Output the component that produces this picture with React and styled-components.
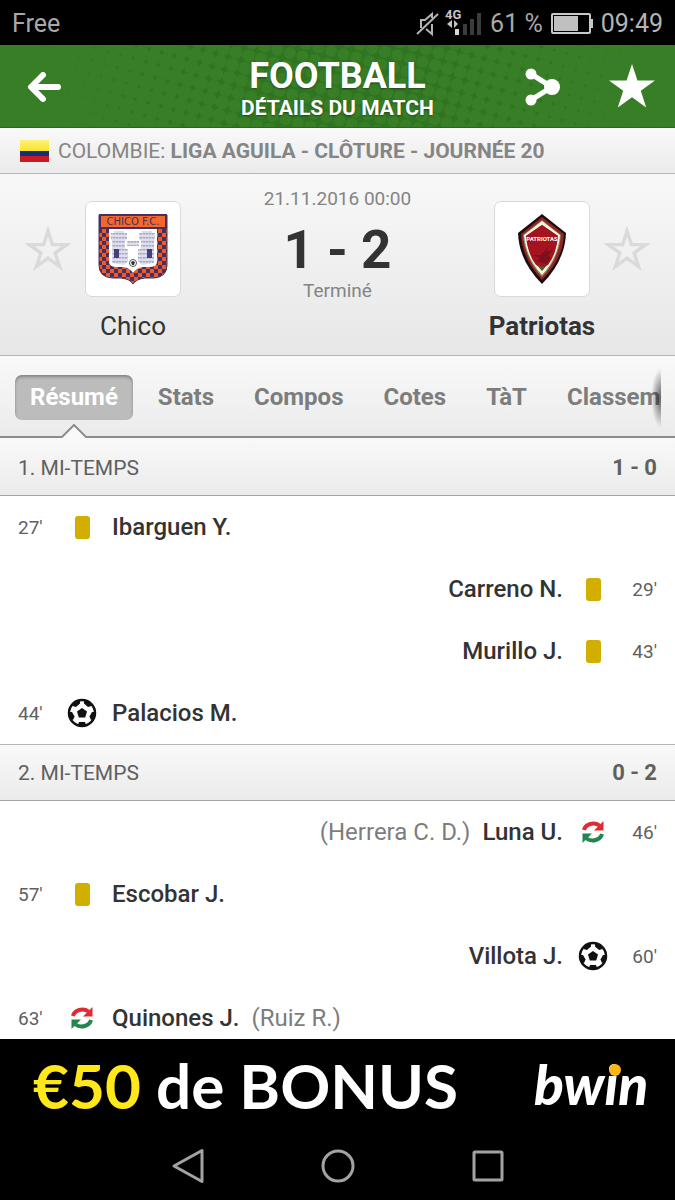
import React from "react";
import styled, { createGlobalStyle, css } from "styled-components";

const periods = [
  {
    name: "1. MI-TEMPS",
    score: "1 - 0",
    events: [
      { time: "27'", type: "card", player: "Ibarguen Y." },
      { time: "29'", type: "card", player: "Carreno N.", away: true },
      { time: "43'", type: "card", player: "Murillo J.", away: true },
      { time: "44'", type: "goal", player: "Palacios M." },
    ],
  },
  {
    name: "2. MI-TEMPS",
    score: "0 - 2",
    events: [
      { time: "46'", type: "sub", player: "Luna U.", out: "(Herrera C. D.)", away: true },
      { time: "57'", type: "card", player: "Escobar J." },
      { time: "60'", type: "goal", player: "Villota J.", away: true },
      { time: "63'", type: "sub", player: "Quinones J.", out: "(Ruiz R.)" },
    ],
  },
];

const tabs = ["Résumé", "Stats", "Compos", "Cotes", "TàT", "Classement"];

// Halftone: the circles grow towards both ends until only small stars are left
const halftone = [];
for (let i = -12; i < 60; i++) {
  for (let j = -24; j < 24; j++) {
    const x = i * 12.6 - j * 3.4;
    const y = i * 3.4 + j * 12.6 - 70;
    if (x > -12 && x < 690 && y > -12 && y < 94) {
      const d = Math.abs(x - 345);
      halftone.push({ x, y, r: 6 + Math.max(0, d - 70) / 70 });
    }
  }
}

const Halftone = () => (
  <Pattern viewBox="0 0 675 82" preserveAspectRatio="xMidYMid slice" aria-hidden="true">
    <rect width="675" height="82" fill="#2f7521" />
    {halftone.map((c, index) => (
      <circle key={index} cx={c.x} cy={c.y} r={c.r} fill="#377e26" />
    ))}
  </Pattern>
);

const StatusIcons = () => (
  <svg width="66" height="34" viewBox="0 0 66 34" aria-hidden="true">
    <g fill="none" stroke="#b4b4b4" strokeWidth="2">
      <path d="M1 27L22 7" />
      <path d="M5 21V13H9L16 7V11M10 22L16 27V17" />
    </g>
    <text x="29" y="12" fontFamily="Roboto, sans-serif" fontSize="13" fontWeight="700" fill="#c4c4c4">
      4G
    </text>
    <path d="M31 17L36 13V21ZM42 17L38 13V21Z" fill="#c4c4c4" />
    <rect x="39" y="22" width="4" height="6" fill="#d8d8d8" />
    <rect x="47" y="17" width="4" height="11" fill="#3c3c3c" />
    <rect x="54" y="12" width="4" height="16" fill="#3c3c3c" />
    <rect x="61" y="6" width="4" height="22" fill="#3c3c3c" />
  </svg>
);

const Battery = () => (
  <svg width="42" height="22" viewBox="0 0 42 22" aria-hidden="true">
    <rect x="1" y="1" width="38" height="19" rx="1" fill="none" stroke="#c8c8c8" strokeWidth="2" />
    <rect x="3" y="3" width="24" height="15" fill="#c0c0c0" />
    <rect x="39" y="6" width="3" height="9" fill="#c8c8c8" />
  </svg>
);

const BackIcon = () => (
  <svg width="34" height="30" viewBox="0 0 34 30" fill="none" stroke="#fff" strokeWidth="6">
    <path d="M16 3L4 15L16 27M5 15H31" strokeLinecap="round" strokeLinejoin="round" />
  </svg>
);

const ShareIcon = () => (
  <svg width="36" height="38" viewBox="0 0 36 38" fill="#fff">
    <path d="M6 6L27 19L6 32" fill="none" stroke="#fff" strokeWidth="5" />
    <circle cx="6" cy="6" r="5.500" />
    <circle cx="6" cy="32" r="5.500" />
    <circle cx="27" cy="19" r="8" />
  </svg>
);

const Star = ({ size, outline }) => (
  <svg width={size} height={size} viewBox={outline ? "-4 -4 54 54" : "1 2 44 44"}>
    <path
      d="M23 2L28.200 17.900H45L31.400 27.700L36.600 43.600L23 33.800L9.400 43.600L14.600 27.700L1 17.900H17.800Z"
      fill={outline ? "none" : "#fff"}
      stroke={outline ? "#dadada" : "none"}
      strokeWidth="4"
    />
  </svg>
);

const ChicoCrest = () => (
  <svg width="70" height="72" viewBox="0 0 70 72" role="img" aria-label="Chico">
    <defs>
      <pattern id="checks" width="8" height="8" patternUnits="userSpaceOnUse">
        <rect width="8" height="8" fill="#f05a28" />
        <rect width="4" height="4" fill="#46305f" />
        <rect x="4" y="4" width="4" height="4" fill="#46305f" />
      </pattern>
      <pattern id="bricks" width="3" height="4" patternUnits="userSpaceOnUse">
        <rect width="3" height="4" fill="#dedeec" />
        <path d="M0 0H3M1 0V2" stroke="#8d8db8" strokeWidth="0.800" />
      </pattern>
    </defs>
    <path
      d="M1 2H69V52Q69 64 56 65H47Q38 66 35 71Q32 66 23 65H14Q1 64 1 52Z"
      fill="url(#checks)"
      stroke="#46305f"
    />
    <path d="M11 16H59V49Q59 54 51 54H45Q38 55 35 60Q32 55 25 54H19Q11 54 11 49Z" fill="#fff" />
    <rect x="1" y="1" width="68" height="15" fill="#46305f" />
    <rect x="3" y="3" width="64" height="11" fill="#f4672c" />
    <text x="35" y="12" textAnchor="middle" fontFamily="DejaVu Sans, sans-serif" fontSize="10" fill="#46305f">
      CHICO F.C.
    </text>
    <path
      d="M13 20H16V18H26V20H29V26L27 28V36H30V48L26 52L14 50V28L13 26ZM57 20H54V18H44V20H41V26L43 28V36H40V48L44 52L56 50V28L57 26Z"
      fill="url(#bricks)"
    />
    <path d="M29 28H41V33H29Z" fill="url(#bricks)" />
    <path d="M16 36H21V45H16ZM49 36H54V45H49Z" fill="#454078" />
    <circle cx="35" cy="50" r="3.500" fill="#fff" stroke="#555" />
    <path d="M33 49L35 48L37 49L36 52H34Z" fill="#333" />
  </svg>
);

const PatriotasCrest = () => (
  <svg width="50" height="72" viewBox="0 0 50 72" role="img" aria-label="Patriotas">
    <path d="M25 1L49 20Q48 48 25 71Q2 48 1 20Z" fill="#190d10" />
    <path d="M25 4L47 21Q46 46 25 67Q5 46 4 21Z" fill="#9a2027" />
    <path d="M25 7L44 22Q42 46 25 64Q8 46 6 22Z" fill="#7d9160" />
    <path d="M25 8L43 22Q41 45 25 62Q9 45 7 22Z" fill="#f7f5dc" />
    <path d="M25 12L41 23Q39 43 25 58Q11 43 9 23Z" fill="#4e5930" />
    <path d="M25 12L41 23Q39 42 31 52Q25 55 19 52Q11 42 9 23Z" fill="#a51220" />
    <path d="M15 42L24 42L32 33L29 39L36 37L31 42L34 45L29 51L19 48L24 45Z" fill="#7c101c" />
    <text x="25" y="28" textAnchor="middle" fontFamily="Roboto, sans-serif" fontSize="6" fontWeight="700" fill="#fff">
      PATRIOTAS
    </text>
  </svg>
);

const Ball = () => (
  <svg width="30" height="30" viewBox="0 0 30 30" role="img" aria-label="But">
    <circle cx="15" cy="15" r="13" fill="#fff" stroke="#111" strokeWidth="2.500" />
    <g fill="#111">
      <path d="M15 10L20 13.500L18.200 19.500H11.800L10 13.500Z" />
      <path d="M8 3L13 2.500L13 5.500L9 9L5.500 8Z" />
      <path d="M22 3L17 2.500L17 5.500L21 9L24.500 8Z" />
      <path d="M2 14L5 14L7.500 18.500L6 22L3.500 21Z" />
      <path d="M28 14L25 14L22.500 18.500L24 22L26.500 21Z" />
      <path d="M11 27L12 24H18L19 27L15 28.500Z" />
    </g>
  </svg>
);

const Substitution = () => (
  <svg width="24" height="24" viewBox="0 0 24 24" role="img" aria-label="Remplacement">
    <path d="M3 10A9.500 8 0 0 1 18.500 5.500" fill="none" stroke="#df2b35" strokeWidth="4" />
    <path d="M22.500 1V10.500H13Z" fill="#df2b35" />
    <path d="M21 14A9.500 8 0 0 1 5.500 18.500" fill="none" stroke="#24844f" strokeWidth="4" />
    <path d="M1.500 23V13.500H11Z" fill="#24844f" />
  </svg>
);

const Flag = () => (
  <svg width="29" height="22" viewBox="0 0 29 22" role="img" aria-label="Colombie">
    <defs>
      <linearGradient id="gloss" x2="0" y2="1">
        <stop stopColor="#fdf07a" />
        <stop offset="1" stopColor="#fae42a" />
      </linearGradient>
    </defs>
    <rect width="29" height="11" fill="url(#gloss)" />
    <rect y="11" width="29" height="5" fill="#10307c" />
    <rect y="16" width="29" height="6" fill="#cc1820" />
  </svg>
);

const BwinLogo = () => (
  <svg width="118" height="66" viewBox="0 0 118 66" role="img" aria-label="bwin">
    <text x="2" y="52" fontFamily="Lato, sans-serif" fontSize="55" fontWeight="900" fontStyle="italic" fill="#fff">
      bwin
    </text>
    <circle cx="83" cy="17" r="6" fill="#fbb615" />
  </svg>
);

const EventIcon = ({ type }) => {
  if (type === "goal") return <Ball />;
  if (type === "sub") return <Substitution />;
  return <YellowCard role="img" aria-label="Carton jaune" />;
};

const App = () => {
  return (
    <Screen>
      <GlobalStyle />
      <StatusBar>
        <span>Free</span>
        <StatusGroup>
          <StatusIcons />
          <span>61 %</span>
          <Battery />
          <Clock>09:49</Clock>
        </StatusGroup>
      </StatusBar>

      <Header>
        <Halftone />
        <HeaderSide>
          <IconButton aria-label="Retour">
            <BackIcon />
          </IconButton>
        </HeaderSide>
        <Titles>
          <Title>FOOTBALL</Title>
          <Subtitle>DÉTAILS DU MATCH</Subtitle>
        </Titles>
        <HeaderSide $end>
          <IconButton aria-label="Partager">
            <ShareIcon />
          </IconButton>
          <IconButton aria-label="Favori">
            <Star size={46} />
          </IconButton>
        </HeaderSide>
      </Header>

      <League>
        <Flag />
        <span>
          COLOMBIE: <b>LIGA AGUILA - CLÔTURE - JOURNÉE 20</b>
        </span>
      </League>

      <Match>
        <Team>
          <IconButton aria-label="Suivre Chico">
            <Star size={46} outline />
          </IconButton>
          <Crest>
            <ChicoCrest />
          </Crest>
          <TeamName>Chico</TeamName>
        </Team>
        <Result>
          <Small>21.11.2016 00:00</Small>
          <Score>1 - 2</Score>
          <Small>Terminé</Small>
        </Result>
        <Team $away>
          <IconButton aria-label="Suivre Patriotas">
            <Star size={46} outline />
          </IconButton>
          <Crest>
            <PatriotasCrest />
          </Crest>
          <TeamName $winner>Patriotas</TeamName>
        </Team>
      </Match>

      <Tabs>
        <TabStrip>
          {tabs.map((tab, index) => (
            <Tab key={tab} $active={index === 0}>
              {tab}
              {index === 0 && (
                <Notch viewBox="0 0 28 15" aria-hidden="true">
                  <path d="M0 15L2 13L14 1L26 13L28 15Z" fill="#f9f9f9" />
                  <path d="M0 14L2 13L14 1L26 13L28 14" fill="none" stroke="#8c8c8c" strokeWidth="2" />
                </Notch>
              )}
            </Tab>
          ))}
        </TabStrip>
        <ScrollShade />
      </Tabs>

      <Summary>
        {periods.map((period) => (
          <section key={period.name}>
            <PeriodHeader>
              <span>{period.name}</span>
              <PeriodScore>{period.score}</PeriodScore>
            </PeriodHeader>
            <Events>
              {period.events.map((event) => (
                <Event key={event.time} $away={event.away}>
                  <Time>{event.time}</Time>
                  <IconCell>
                    <EventIcon type={event.type} />
                  </IconCell>
                  <Player>{event.player}</Player>
                  {event.out && <Replaced>{event.out}</Replaced>}
                </Event>
              ))}
            </Events>
          </section>
        ))}
      </Summary>

      <Advert href="#bonus">
        <Offer>
          <em>€50</em> de BONUS
        </Offer>
        <BwinLogo />
      </Advert>

      <SystemNav>
        <IconButton aria-label="Précédent">
          <svg width="36" height="36" viewBox="0 0 36 36" fill="none" stroke="#a3a3a3" strokeWidth="3">
            <path d="M32 2.500V33.500L4 18Z" strokeLinejoin="round" />
          </svg>
        </IconButton>
        <IconButton aria-label="Accueil">
          <svg width="36" height="36" viewBox="0 0 36 36" fill="none" stroke="#a3a3a3" strokeWidth="3">
            <circle cx="18" cy="18" r="15" />
          </svg>
        </IconButton>
        <IconButton aria-label="Applications">
          <svg width="36" height="36" viewBox="0 0 36 36" fill="none" stroke="#a3a3a3" strokeWidth="3">
            <rect x="4" y="4" width="28" height="28" rx="1" />
          </svg>
        </IconButton>
      </SystemNav>
    </Screen>
  );
};

// Styled Components
const GlobalStyle = createGlobalStyle`
  * {
    box-sizing: border-box;
  }
  body {
    margin: 0;
    background: #000;
    font-family: Roboto, "Liberation Sans", sans-serif;
  }
`;

const bar = css`
  background: linear-gradient(#f9f9f9, #ebebeb);
`;

const Screen = styled.div`
  display: flex;
  flex-direction: column;
  height: 100vh;
  overflow: hidden;
  background: #fff;
  svg {
    display: block;
    flex-shrink: 0;
  }
`;

const StatusBar = styled.div`
  display: flex;
  flex-shrink: 0;
  align-items: center;
  justify-content: space-between;
  height: 45px;
  padding: 2px 12px 0;
  background: #000;
  color: #a8a8a8;
  font-size: 25px;
`;

const StatusGroup = styled.div`
  display: flex;
  align-items: center;
  gap: 8px;
`;

const Clock = styled.time`
  color: #b4b4b4;
`;

const Header = styled.header`
  position: relative;
  display: flex;
  flex-shrink: 0;
  align-items: center;
  height: 83px;
  padding: 2px 20px 0;
  border-bottom: 1px solid #2a661d;
  background: #377e26;
`;

const Pattern = styled.svg`
  position: absolute;
  inset: 0;
  width: 100%;
  height: 100%;
`;

const HeaderSide = styled.div`
  position: relative;
  display: flex;
  flex: 1 0 140px;
  align-items: center;
  justify-content: ${(props) => (props.$end ? "flex-end" : "flex-start")};
  gap: 48px;
  padding-left: ${(props) => (props.$end ? 0 : "7px")};
`;

const IconButton = styled.button`
  display: block;
  padding: 0;
  border: 0;
  background: none;
  cursor: pointer;
`;

const Titles = styled.div`
  position: relative;
  padding-top: 4px;
  color: #fff;
  text-align: center;
  text-shadow: 0 1px 2px rgba(0, 0, 0, 0.4);
`;

const Title = styled.h1`
  margin: 0;
  font-size: 36px;
  font-weight: 700;
  line-height: 38px;
`;

const Subtitle = styled.h2`
  margin: 0;
  font-size: 21px;
  font-weight: 700;
  line-height: 26px;
`;

const League = styled.div`
  ${bar}
  display: flex;
  flex-shrink: 0;
  align-items: center;
  gap: 9px;
  height: 46px;
  padding: 0 20px;
  border-bottom: 1px solid #b9b9b9;
  color: #858585;
  font-size: 21px;
  white-space: nowrap;
`;

const Match = styled.div`
  display: flex;
  flex-shrink: 0;
  justify-content: space-between;
  height: 182px;
  padding: 0 25px;
  border-bottom: 1px solid #b4b4b4;
  background: linear-gradient(#f8f8f8, #e7e7e7);
`;

const Team = styled.div`
  display: grid;
  grid-template-columns: ${(props) => (props.$away ? "96px 46px" : "46px 96px")};
  column-gap: 14px;
  row-gap: 14px;
  align-items: center;
  align-content: start;
  padding-top: 27px;
  ${IconButton} {
    grid-row: 1;
    grid-column: ${(props) => (props.$away ? 2 : 1)};
  }
  > div {
    grid-column: ${(props) => (props.$away ? 1 : 2)};
  }
`;

const Crest = styled.div`
  display: flex;
  grid-row: 1;
  align-items: center;
  justify-content: center;
  height: 96px;
  border: 1px solid #d9d9d9;
  border-radius: 7px;
  background: #fff;
`;

const TeamName = styled.div`
  grid-row: 2;
  justify-self: center;
  color: #333;
  font-size: 26px;
  font-weight: ${(props) => (props.$winner ? 700 : 400)};
  line-height: 30px;
`;

const Result = styled.div`
  padding-top: 12px;
  text-align: center;
`;

const Small = styled.div`
  color: #848484;
  font-size: 19px;
  line-height: 26px;
`;

const Score = styled.div`
  padding-top: 10px;
  color: #333;
  font-size: 53px;
  font-weight: 700;
  line-height: 56px;
`;

const Tabs = styled.nav`
  ${bar}
  position: relative;
  flex-shrink: 0;
  height: 82px;
  padding: 0 14px 0 15px;
  box-shadow: inset 0 -2px #8c8c8c;
`;

const TabStrip = styled.div`
  display: flex;
  align-items: center;
  gap: 10px;
  height: 82px;
  overflow: hidden;
`;

const Tab = styled.button`
  position: relative;
  height: 45px;
  flex-shrink: 0;
  padding: 0 15px;
  border: 0;
  border-radius: 7px;
  background: ${(props) => (props.$active ? "#bcbcbc" : "none")};
  box-shadow: ${(props) => (props.$active ? "inset 0 2px 3px rgba(0, 0, 0, 0.3)" : "none")};
  color: ${(props) => (props.$active ? "#fff" : "#7d7d7d")};
  font-family: inherit;
  font-size: 24px;
  font-weight: 700;
  cursor: pointer;
`;

const Notch = styled.svg`
  position: absolute;
  top: 49px;
  left: 50%;
  width: 28px;
  height: 15px;
  margin-left: -14px;
`;

const ScrollShade = styled.div`
  position: absolute;
  top: 12px;
  right: 14px;
  width: 10px;
  height: 60px;
  background: radial-gradient(ellipse at 100% 50%, rgba(0, 0, 0, 0.6), rgba(0, 0, 0, 0) 70%);
`;

const Summary = styled.main`
  flex: 1;
  min-height: 0;
  overflow-y: auto;
  scrollbar-width: none;
`;

const PeriodHeader = styled.h3`
  ${bar}
  display: flex;
  align-items: center;
  justify-content: space-between;
  height: 57px;
  margin: 0;
  padding: 0 18px;
  border-bottom: 1px solid #a6a6a6;
  color: #606060;
  font-size: 21px;
  font-weight: 400;
  section:first-child > & {
    height: 58px;
    padding-top: 2px;
  }
  section + section > & {
    border-top: 1px solid #b4b4b4;
  }
`;

const PeriodScore = styled.b`
  font-size: 22px;
`;

const Events = styled.ul`
  margin: 0;
  padding: 0;
  list-style: none;
`;

const Event = styled.li`
  display: flex;
  flex-direction: ${(props) => (props.$away ? "row-reverse" : "row")};
  align-items: center;
  height: 62px;
  padding: 0 18px;
  text-align: ${(props) => (props.$away ? "right" : "left")};
`;

const Time = styled.span`
  width: 46px;
  color: #606060;
  font-size: 19px;
`;

const IconCell = styled.span`
  display: flex;
  justify-content: center;
  width: 36px;
`;

const YellowCard = styled.span`
  width: 15px;
  height: 23px;
  border-radius: 3px;
  background: #d1ae00;
`;

const Player = styled.span`
  margin: 0 12px;
  color: #333;
  font-size: 24px;
  font-weight: 500;
`;

const Replaced = styled.span`
  color: #7d7d7d;
  font-size: 24px;
`;

const Advert = styled.a`
  display: flex;
  flex-shrink: 0;
  align-items: center;
  justify-content: space-between;
  height: 93px;
  padding: 0 25px 0 33px;
  background: #000;
  color: #fff;
  text-decoration: none;
`;

const Offer = styled.span`
  font-family: Lato, sans-serif;
  font-size: 62px;
  font-weight: 700;
  line-height: 93px;
  white-space: nowrap;
  em {
    color: #ffe81a;
    font-style: normal;
  }
`;

const SystemNav = styled.nav`
  display: flex;
  flex-shrink: 0;
  align-items: center;
  justify-content: center;
  gap: 114px;
  height: 68px;
  background: #000;
`;

export default App;
